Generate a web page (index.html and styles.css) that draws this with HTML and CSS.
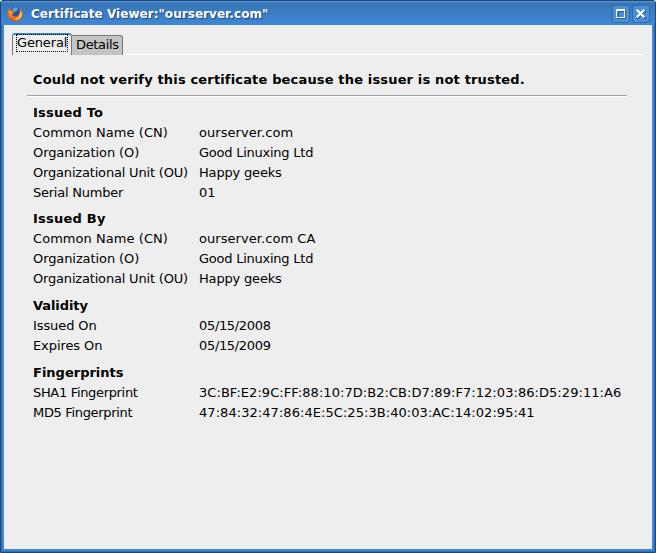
FILE: index.html
```html
<!DOCTYPE html>
<html lang="en">
<head>
<meta charset="utf-8">
<title>Certificate Viewer</title>
<link rel="stylesheet" href="styles.css">
</head>
<body>
<div class="window">
  <header class="titlebar">
    <svg class="logo" width="16" height="16" viewBox="0 0 16 16">
      <circle cx="8.3" cy="7.6" r="6.6" fill="#2459a6"/>
      <path d="M5 3Q8 0 11 2L10 5 7 6Z" fill="#53a5df"/>
      <path d="M1.500 2.200L2.700 4Q4 2.800 5.800 3.400L5.400 5 7.700 6.100 6 7.500 5.600 9.200Q8 11.400 11 9.700 13.300 7.800 12.700 4.800L12 2Q15.600 4.500 15.400 8.500 15 13.500 10.300 15 5.400 16.100 2.100 12.500-.4 9.300.8 5Z" fill="#e96919"/>
      <path d="M14 4.600Q15.800 8.200 13.600 11.500 10.500 14.400 7 13.100 12.600 12.400 14 4.600Z" fill="#ffd34a"/>
      <path d="M1.600 5.200L4.800 4.700 4.200 6.200 6.300 6.700 4 8.300Q4 10.400 6 11.700 2.500 11 1.600 5.200Z" fill="#f8a52b"/>
      <path d="M1.500 10Q4 14.500 9 14.800 4 16 1.500 10Z" fill="#c22e18"/>
    </svg>
    <h1 class="title">Certificate Viewer:"ourserver.com"</h1>
    <div class="buttons">
      <span class="button"><svg width="18" height="18" viewBox="0 0 18 18" shape-rendering="crispEdges"><path d="M5 13h9v1H5zM13 5h1v9h-1zM6 6h6v1H6zM6 6h1v6H6z" fill="#245d9b"/><path d="M4 4h9v9H4zM5 6v6h7V6z" fill="#fff" fill-rule="evenodd"/></svg></span>
      <span class="button"><svg width="18" height="18" viewBox="0 0 18 18"><path d="M6 6l7 7m0-7l-7 7" stroke="#245d9b" stroke-width="2" stroke-linecap="square"/><path d="M5.500 5.500l6 6m0-6l-6 6" stroke="#fff" stroke-width="2.200" stroke-linecap="square"/></svg></span>
    </div>
  </header>
  <main class="content">
    <nav class="tabs">
      <span class="tab active"><span class="focus">General</span></span>
      <span class="tab">Details</span>
    </nav>
    <section class="panel">
      <h2 class="status">Could not verify this certificate because the issuer is not trusted.</h2>
      <dl class="group first">
        <dt class="heading spread">Issued To</dt>
        <dt class="wide">Common Name (CN)</dt><dd class="wide">ourserver.com</dd>
        <dt class="snug">Organization (O)</dt><dd class="tight">Good Linuxing Ltd</dd>
        <dt class="close">Organizational Unit (OU)</dt><dd class="close">Happy geeks</dd>
        <dt class="tight">Serial Number</dt><dd>01</dd>
      </dl>
      <dl class="group second">
        <dt class="heading spread">Issued By</dt>
        <dt class="wide">Common Name (CN)</dt><dd class="wide">ourserver.com CA</dd>
        <dt class="snug">Organization (O)</dt><dd class="tight">Good Linuxing Ltd</dd>
        <dt class="close">Organizational Unit (OU)</dt><dd class="close">Happy geeks</dd>
      </dl>
      <dl class="group">
        <dt class="heading snug">Validity</dt>
        <dt class="snug">Issued On</dt><dd class="dense">05/15/2008</dd>
        <dt class="snug">Expires On</dt><dd class="dense">05/15/2009</dd>
      </dl>
      <dl class="group">
        <dt class="heading">Fingerprints</dt>
        <dt class="dense">SHA1 Fingerprint</dt><dd class="wide">3C:BF:E2:9C:FF:88:10:7D:B2:CB:D7:89:F7:12:03:86:D5:29:11:A6</dd>
        <dt class="dense">MD5 Fingerprint</dt><dd class="wide">47:84:32:47:86:4E:5C:25:3B:40:03:AC:14:02:95:41</dd>
      </dl>
    </section>
  </main>
</div>
</body>
</html>
```

FILE: styles.css
```css
* { box-sizing: border-box; }
body {
  margin: 0;
  background: #fff;
  color: #000;
  font-family: "DejaVu Sans", sans-serif;
  font-size: 13px;
}
.window {
  display: flex;
  flex-direction: column;
  width: 656px;
  height: 553px;
  padding: 0 3px 3px;
  border: 1px solid #1d4676;
  border-radius: 3px 3px 0 0;
  background: #3f88d6;
  box-shadow: inset 1px 0 #2e6cb0, inset -1px -1px #2e6cb0;
}
.titlebar {
  display: flex;
  align-items: center;
  flex: none;
  height: 24px;
  margin: 0 -3px;
  padding: 1px 5px 0 6px;
  border-radius: 2px 2px 0 0;
  background: linear-gradient(#5b9ce0 0, #3874b5 2px, #3f88d6 100%);
}
.logo { display: block; }
.title {
  flex: 1;
  margin: 0 0 0 8px;
  color: #fff;
  font-size: 12px;
  font-weight: bold;
  letter-spacing: .05px;
  line-height: 18px;
  text-shadow: 1px 1px 1px #1d4676;
}
.buttons { display: flex; gap: 2px; }
.button {
  width: 18px;
  height: 18px;
  border-radius: 3px;
  background: #4d8fd6;
  box-shadow: inset 0 0 0 1px #2f6cad;
}
.button svg { display: block; }
.content {
  flex: 1;
  padding: 8px 9px 0 8px;
  background: #eee;
}
.tabs {
  display: flex;
  align-items: flex-end;
  height: 22px;
  border-bottom: 1px solid #fff;
}
.tab {
  width: 51px;
  height: 20px;
  margin-bottom: -1px;
  padding: 0 4px;
  border: 1px solid #777;
  border-left: 0;
  border-bottom: 0;
  border-radius: 0 3px 0 0;
  background: #c4c4c4;
  letter-spacing: -.35px;
  line-height: 17px;
}
.active {
  height: 22px;
  width: 60px;
  padding: 0 3px;
  border: 1px solid #777;
  border-top: 2px solid #3f88d6;
  border-bottom: 0;
  border-radius: 3px 3px 0 0;
  background: #eee;
  letter-spacing: -.15px;
}
.focus {
  display: block;
  height: 18px;
  margin-top: -1px;
  border: 1px dotted #000;
  line-height: 15px;
}
.panel { padding: 12px 16px 0 15px; }
.status {
  height: 29px;
  margin: 0;
  padding-left: 6px;
  border-bottom: 1px solid #a0a0a0;
  box-shadow: 0 1px #fff;
  font-size: 13px;
  letter-spacing: .16px;
  line-height: 26px;
}
.group {
  display: grid;
  grid-template-columns: 166px 1fr;
  grid-auto-rows: 20px;
  margin: 7px 0 0;
  padding-left: 6px;
  line-height: 20px;
  white-space: nowrap;
}
.second { margin-top: 6px; }
.heading { grid-column: 1 / -1; font-weight: bold; }
dd { margin: 0; }
.spread { letter-spacing: .22px; }
.wide { letter-spacing: .055px; }
.snug { letter-spacing: -.09px; }
.close { letter-spacing: -.18px; }
.tight { letter-spacing: -.24px; }
.dense { letter-spacing: -.33px; }
```
